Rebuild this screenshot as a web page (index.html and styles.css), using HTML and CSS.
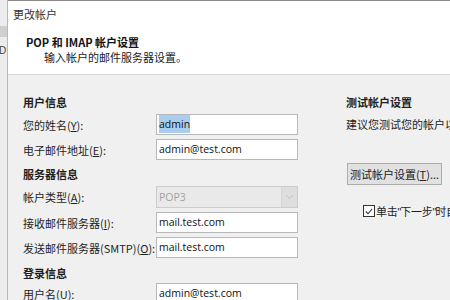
FILE: index.html
```html
<!DOCTYPE html>
<html lang="zh-CN">
<head>
    <meta charset="UTF-8">
    <meta name="viewport" content="width=device-width, initial-scale=1.0">
    <title>更改帐户</title>
    <link rel="stylesheet" href="styles.css">
</head>
<body>
    <div class="behind">
        <div class="behind-band"></div>
        <div class="behind-char">D</div>
    </div>

    <div class="dialog">
        <div class="header">
            <div class="window-title">更改帐户</div>
            <div class="page-title">POP 和 IMAP 帐户设置</div>
            <div class="page-sub">输入帐户的邮件服务器设置。</div>
        </div>

        <div class="content">
            <div class="col-left">
                <div class="section-title first">用户信息</div>
                <div class="row">
                    <label class="label">您的姓名(<u>Y</u>):</label>
                    <div class="input"><span class="selected">admin</span></div>
                </div>
                <div class="row">
                    <label class="label">电子邮件地址(<u>E</u>):</label>
                    <div class="input">admin@test.com</div>
                </div>

                <div class="section-title">服务器信息</div>
                <div class="row">
                    <label class="label">帐户类型(<u>A</u>):</label>
                    <div class="select">
                        <span class="select-value">POP3</span>
                        <span class="select-arrow">
                            <svg width="9" height="6" viewBox="0 0 9 6"><path d="M1 1 L4.5 4.5 L8 1" fill="none" stroke="#c4c4c4" stroke-width="1"/></svg>
                        </span>
                    </div>
                </div>
                <div class="row">
                    <label class="label">接收邮件服务器(<u>I</u>):</label>
                    <div class="input">mail.test.com</div>
                </div>
                <div class="row">
                    <label class="label">发送邮件服务器(SMTP)(<u>O</u>):</label>
                    <div class="input">mail.test.com</div>
                </div>

                <div class="section-title last">登录信息</div>
                <div class="row">
                    <label class="label">用户名(<u>U</u>):</label>
                    <div class="input">admin@test.com</div>
                </div>
            </div>

            <div class="col-right">
                <div class="section-title first">测试帐户设置</div>
                <div class="desc">建议您测试您的帐户以确保条目正确无误。</div>
                <button class="btn">测试帐户设置(<u>T</u>)...</button>
                <div class="check-row">
                    <span class="checkbox">
                        <svg width="11" height="11" viewBox="0 0 11 11"><path d="M2 5.5 L4.5 8 L9 2.5" fill="none" stroke="#333" stroke-width="1.2"/></svg>
                    </span>
                    <span class="check-label">单击<span class="quote">"</span>下一步<span class="quote">"</span>时自动测试帐户设置(<u>S</u>)</span>
                </div>
            </div>
        </div>
    </div>
</body>
</html>
```

FILE: styles.css
```css
html, body {
    margin: 0;
    padding: 0;
}
body {
    width: 450px;
    height: 300px;
    overflow: hidden;
    display: flex;
    font-family: "Noto Sans CJK SC", "Noto Sans", sans-serif;
    font-size: 11px;
    color: #1e1e1e;
    background: #f0f0f0;
}

/* window behind the dialog */
.behind {
    width: 7px;
    flex-shrink: 0;
    background: #ececec;
    border-right: 1px solid #b9b9b9;
    overflow: hidden;
}
.behind-band {
    height: 11px;
    margin-top: 26px;
    background: #cfcfcf;
}
.behind-char {
    margin-top: 8px;
    margin-left: -1px;
    font-family: "Liberation Sans", sans-serif;
    font-size: 10px;
    color: #444;
}

.dialog {
    flex: 1;
    border-top: 1px solid #8a8a8a;
    display: flex;
    flex-direction: column;
    min-width: 0;
    overflow: hidden;
}

.header {
    flex-shrink: 0;
    height: 73px;
    background: #fff;
    border-bottom: 1px solid #d9d9d9;
}
.window-title {
    margin: 5px 0 0 5px;
    height: 16px;
    line-height: 16px;
    font-size: 11px;
    color: #333;
}
.page-title {
    margin: 12px 0 0 18px;
    height: 16px;
    line-height: 16px;
    font-weight: bold;
    color: #111;
}
.page-sub {
    margin: 0 0 0 36px;
    height: 16px;
    line-height: 14px;
    color: #222;
}

.content {
    flex-shrink: 0;
    display: flex;
    padding: 19px 0 0 15px;
}
.col-left {
    width: 275px;
    flex-shrink: 0;
}
.col-right {
    margin-left: 48px;
    white-space: nowrap;
    min-width: 0;
}

.section-title {
    height: 16px;
    line-height: 16px;
    font-weight: bold;
    margin: 6px 0 4px;
}
.section-title.first {
    margin-top: 0;
}
.section-title.last {
    margin-top: 7px;
    margin-bottom: 2px;
}

.row {
    display: flex;
    align-items: center;
    height: 21px;
    margin-bottom: 4px;
}
.label {
    width: 133px;
    flex-shrink: 0;
    line-height: 14px;
}
.input {
    box-sizing: border-box;
    width: 142px;
    height: 21px;
    line-height: 19px;
    padding: 0 2px;
    background: #fff;
    border: 1px solid #b8b8b8;
    font-family: "Open Sans", "Noto Sans", sans-serif;
    font-size: 10.5px;
    color: #111;
    white-space: nowrap;
    overflow: hidden;
}
.selected {
    background: #a9cdef;
    padding: 2px 0;
}

.select {
    box-sizing: border-box;
    width: 142px;
    height: 22px;
    display: flex;
    background: #e9e9e9;
    border: 1px solid #cdcdcd;
}
.row:has(.select) {
    height: 22px;
}
.select-value {
    flex: 1;
    line-height: 20px;
    padding-left: 2px;
    font-family: "Open Sans", "Noto Sans", sans-serif;
    font-size: 10.5px;
    color: #a3a3a3;
}
.select-arrow {
    width: 15px;
    display: flex;
    align-items: center;
    justify-content: center;
    background: #dedede;
    border-left: 1px solid #d6d6d6;
}

.desc {
    height: 16px;
    line-height: 16px;
    margin-top: 6px;
}
.btn {
    display: block;
    box-sizing: border-box;
    margin: 31px 0 0 1px;
    width: 95px;
    height: 22px;
    padding: 0;
    background: #e1e1e1;
    border: 1px solid #adadad;
    font-family: inherit;
    font-size: 11px;
    color: #222;
}
.check-row {
    display: flex;
    align-items: center;
    margin: 19px 0 0 17px;
    height: 14px;
}
.checkbox {
    box-sizing: border-box;
    width: 12px;
    height: 12px;
    border: 1px solid #333;
    background: #fff;
    display: flex;
    align-items: center;
    justify-content: center;
    margin-right: 1px;
}
.checkbox svg {
    display: block;
}
.check-label {
    letter-spacing: -0.3px;
}
.quote {
    font-family: "Liberation Sans", sans-serif;
    letter-spacing: -1px;
}
```
